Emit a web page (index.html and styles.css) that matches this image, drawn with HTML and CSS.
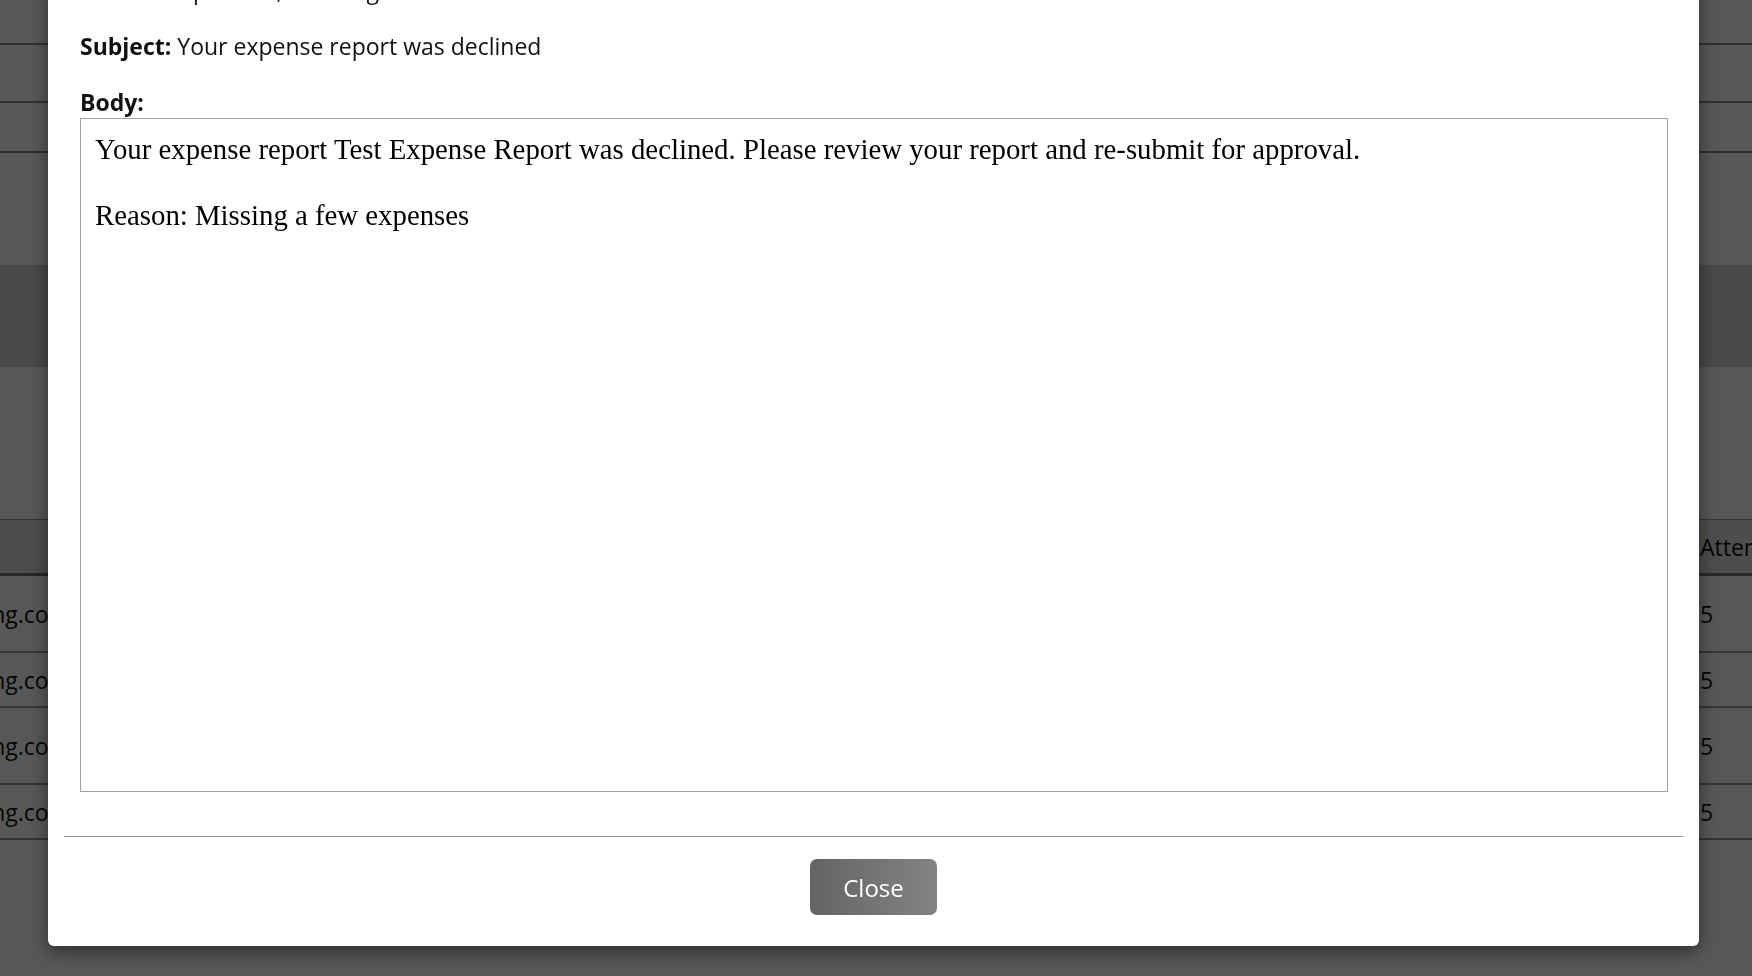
FILE: index.html
```html
<!DOCTYPE html>
<html lang="en">
<head>
  <meta charset="UTF-8">
  <meta name="viewport" content="width=device-width, initial-scale=1.0">
  <title>Expense Reports</title>
  <link rel="stylesheet" href="styles.css">
</head>
<body>
  <!-- Page behind the modal -->
  <div class="page">
    <div class="nav-row"></div>
    <div class="nav-row nav-row-mid"></div>
    <div class="nav-row nav-row-low"></div>
    <div class="spacer"></div>
    <div class="toolbar"></div>
    <div class="spacer spacer-tall"></div>
    <div class="table">
      <div class="table-head">
        <div class="cell cell-email"></div>
        <div class="cell cell-fill"></div>
        <div class="cell cell-count">Attendees</div>
      </div>
      <div class="table-row row-tall">
        <div class="cell cell-email">jane.doe@testing.com</div>
        <div class="cell cell-fill"></div>
        <div class="cell cell-count">5</div>
      </div>
      <div class="table-row">
        <div class="cell cell-email">greg.smith@testing.com</div>
        <div class="cell cell-fill"></div>
        <div class="cell cell-count">5</div>
      </div>
      <div class="table-row row-tall">
        <div class="cell cell-email">mark.lee@testing.com</div>
        <div class="cell cell-fill"></div>
        <div class="cell cell-count">5</div>
      </div>
      <div class="table-row">
        <div class="cell cell-email">amy.chen@testing.com</div>
        <div class="cell cell-fill"></div>
        <div class="cell cell-count">5</div>
      </div>
    </div>
  </div>

  <!-- Modal: email preview -->
  <div class="overlay"></div>
  <div class="modal">
    <div class="modal-body">
      <p class="field"><strong>To:</strong> Sam Alpertson, Tracking</p>
      <p class="field"><strong>Subject:</strong> Your expense report was declined</p>
      <p class="field-label">Body:</p>
      <div class="email-body">
        Your expense report Test Expense Report was declined. Please review your report and re-submit for approval.<br><br>Reason: Missing a few expenses
      </div>
    </div>
    <div class="modal-footer">
      <button type="button" class="btn-close">Close</button>
    </div>
  </div>
</body>
</html>
```

FILE: styles.css
```css
/* General */
html, body {
  height: 100%;
}
body {
  margin: 0;
  padding: 0;
  font-family: "Open Sans", Arial, sans-serif;
  font-size: 23px;
  color: #111;
  background: #fff;
  overflow: hidden;
}

/* Page behind the modal */
.page {
  display: flex;
  flex-direction: column;
}
.nav-row {
  height: 45px;
  border-bottom: 2px solid #8c8c8c;
  box-sizing: border-box;
}
.nav-row-mid {
  height: 58px;
}
.nav-row-low {
  height: 50px;
}
.spacer {
  height: 112px;
}
.spacer-tall {
  height: 152px;
}
.toolbar {
  height: 102px;
  background: #d6d6d6;
}
.table-head,
.table-row {
  display: flex;
  align-items: center;
  box-sizing: border-box;
}
.table-head {
  height: 57px;
  background: #dedede;
  border-top: 1px solid #999;
  border-bottom: 3px solid #777;
}
.table-row {
  height: 55px;
  border-bottom: 2px solid #999;
}
.table-row.row-tall {
  height: 77px;
}
.cell {
  white-space: nowrap;
  overflow: hidden;
}
.cell-email {
  width: 70px;
  display: flex;
  justify-content: flex-end;
}
.cell-fill {
  flex: 1;
}
.cell-count {
  width: 52px;
}

/* Modal */
.overlay {
  position: fixed;
  left: 0;
  top: 0;
  width: 100%;
  height: 100%;
  background: rgba(0, 0, 0, 0.655);
}
.modal {
  position: fixed;
  left: 48px;
  right: 53px;
  bottom: 30px;
  background: #fff;
  border-radius: 6px;
  box-shadow: 0 5px 18px rgba(0, 0, 0, 0.5);
}
.modal-body {
  padding: 0 31px 0 32px;
}
.field {
  margin: 0 0 25px;
  line-height: 31px;
}
.field strong,
.field-label {
  font-weight: bold;
}
.field-label {
  margin: 0;
  line-height: 31px;
}
.email-body {
  height: 674px;
  box-sizing: border-box;
  border: 1px solid #a0a0a0;
  padding: 14px 14px;
  font-family: "Liberation Serif", "Times New Roman", serif;
  font-size: 28.8px;
  line-height: 33px;
  color: #000;
}
.modal-footer {
  margin: 44px 16px 0;
  border-top: 1px solid #999;
  padding: 22px 0 31px;
  text-align: center;
}
.btn-close {
  width: 127px;
  height: 56px;
  border: none;
  border-radius: 7px;
  background: linear-gradient(to right, #646464, #838383);
  color: #fff;
  font-family: "Open Sans", Arial, sans-serif;
  font-size: 24px;
  cursor: pointer;
  vertical-align: top;
}
```
